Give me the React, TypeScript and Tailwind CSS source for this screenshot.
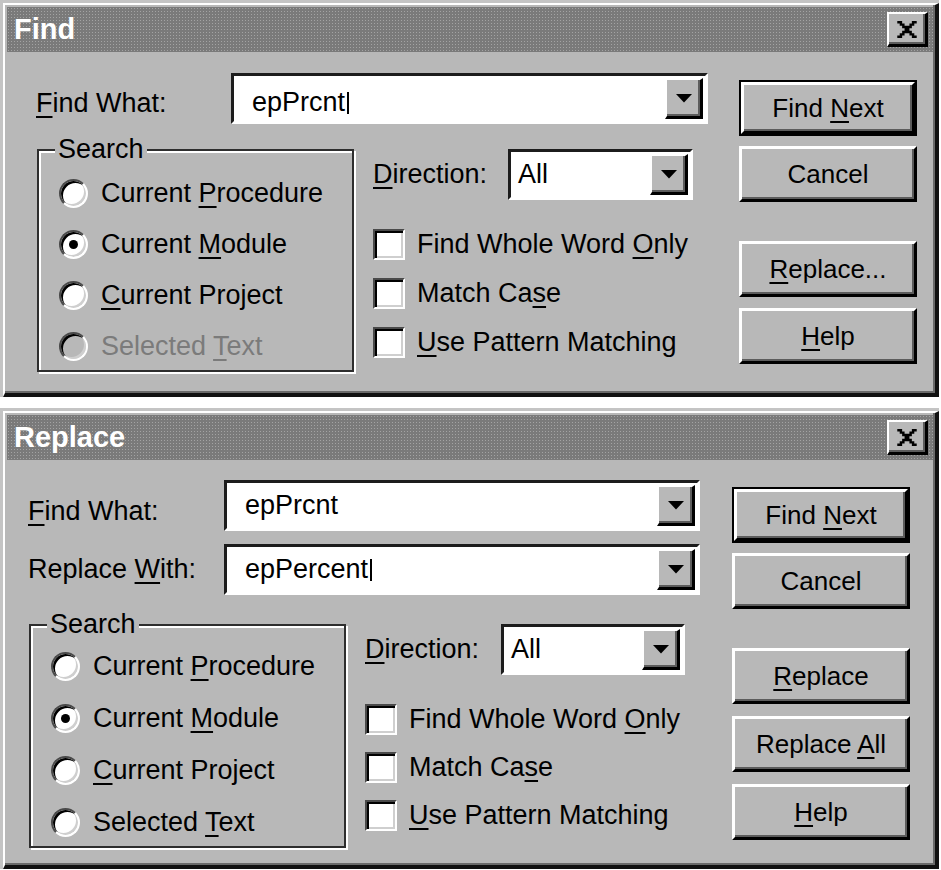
import React from "react";

const FACE = "bg-[#b8b8b8]";

function U({ children }: { children: React.ReactNode }) {
  return <span className="underline decoration-2 underline-offset-[4px]">{children}</span>;
}

function Arrow() {
  return (
    <svg width="16" height="9" viewBox="0 0 16 9">
      <polygon points="0,0 16,0 8,8.5" fill="#000" />
    </svg>
  );
}

function CloseGlyph() {
  return (
    <svg width="20" height="17" viewBox="0 0 8 7">
      <path
        d="M0 0h2v1H0zM6 0h2v1H6zM1 1h2v1H1zM5 1h2v1H5zM2 2h4v1H2zM3 3h2v1H3zM2 4h4v1H2zM1 5h2v1H1zM5 5h2v1H5zM0 6h2v1H0zM6 6h2v1H6z"
        fill="#000"
      />
    </svg>
  );
}

function TitleBar({ title }: { title: string }) {
  return (
    <div className="flex h-[45px] items-center justify-between bg-[#7a7a7a] pl-[7px] pr-[5px] [background-image:radial-gradient(circle,#a3a3a3_0.7px,transparent_1px)] [background-size:3px_3px]">
      <span className="text-[29px] leading-none font-bold text-white">{title}</span>
      <div className={`flex h-[35px] w-[41px] items-center justify-center border-t-2 border-l-2 border-t-white border-l-white border-b-[3px] border-r-[3px] border-b-black border-r-black ${FACE} shadow-[inset_-2px_-2px_0_#5c5c5c]`}>
        <CloseGlyph />
      </div>
    </div>
  );
}

function Dialog({ title, body, children }: { title: string; body: string; children: React.ReactNode }) {
  return (
    <div className="w-[939px] border-t-[3px] border-l-[3px] border-t-[#c4c4c4] border-l-[#c4c4c4]">
      <div className={`border-t-2 border-l-2 border-t-white border-l-white border-b-4 border-r-4 border-b-[#111] border-r-[#111] ${FACE} p-[2px] shadow-[inset_-2px_-2px_0_#6a6a6a]`}>
        <TitleBar title={title} />
        <div className={body}>{children}</div>
      </div>
    </div>
  );
}

function Btn({ children, def, gap }: { children: React.ReactNode; def?: boolean; gap?: string }) {
  const face = (
    <div className={`flex h-full w-full items-center justify-center border-t-[3px] border-l-[3px] border-t-white border-l-white border-b-[3px] border-r-[3px] border-b-black border-r-black ${FACE} shadow-[inset_-2px_-2px_0_#5c5c5c] text-[26px] leading-none text-black`}>
      <span>{children}</span>
    </div>
  );
  return (
    <div className={`h-[56px] w-[178px] ${gap ?? ""} ${def ? "border-2 border-black" : ""}`}>{face}</div>
  );
}

function Combo({ w, pad, children }: { w: string; pad: string; children: React.ReactNode }) {
  return (
    <div className={`flex h-[51px] ${w} border-t-[3px] border-l-[3px] border-t-[#1c1c1c] border-l-[#1c1c1c] border-b-[3px] border-r-[3px] border-b-white border-r-white bg-white`}>
      <div className={`flex flex-1 items-center ${pad} text-[27px] leading-none text-black`}>{children}</div>
      <div className={`my-[2px] mr-[2px] flex w-[38px] items-center justify-center border-t-2 border-l-2 border-t-white border-l-white border-b-[3px] border-r-[3px] border-b-black border-r-black ${FACE} shadow-[inset_-2px_-2px_0_#5c5c5c]`}>
        <Arrow />
      </div>
    </div>
  );
}

function Caret() {
  return <span className="ml-[2px] inline-block h-[22px] w-[2px] bg-black" />;
}

function Radio({ checked, disabled }: { checked?: boolean; disabled?: boolean }) {
  return (
    <div
      className={`flex h-[29px] w-[29px] shrink-0 items-center justify-center rounded-full border-2 border-t-[#4a4a4a] border-l-[#4a4a4a] border-b-white border-r-white ${disabled ? FACE : "bg-white"} shadow-[inset_2px_2px_0_#000,inset_-2px_-2px_0_#cfcfcf]`}
    >
      {checked && <div className="h-[9px] w-[9px] rounded-full bg-black" />}
    </div>
  );
}

function Check() {
  return (
    <div className="h-[31px] w-[32px] shrink-0 border-2 border-t-[#4a4a4a] border-l-[#4a4a4a] border-b-white border-r-white bg-white shadow-[inset_2px_2px_0_#000,inset_-2px_-2px_0_#cfcfcf]" />
  );
}

function SearchGroup({ h, pt, row, disabledLast }: { h: string; pt: string; row: string; disabledLast?: boolean }) {
  const items: { label: React.ReactNode; checked?: boolean; disabled?: boolean }[] = [
    { label: <>Current <U>P</U>rocedure</> },
    { label: <>Current <U>M</U>odule</>, checked: true },
    { label: <><U>C</U>urrent Project</> },
    { label: <>Selected <U>T</U>ext</>, disabled: disabledLast },
  ];
  return (
    <div className={`relative ml-[1px] w-[317px] ${h} border-2 border-[#2e2e2e] shadow-[2px_2px_0_#fff,inset_2px_2px_0_#fff] ${pt}`}>
      <span className={`absolute -top-[15px] left-[16px] ${FACE} px-[3px] text-[27px] leading-[26px] text-black`}>Search</span>
      {items.map((it, i) => (
        <div key={i} className={`flex ${row} items-center gap-[13px] pl-[20px]`}>
          <Radio checked={it.checked} disabled={it.disabled} />
          <span className={`text-[27px] leading-none ${it.disabled ? "text-[#7b7b7b]" : "text-black"}`}>{it.label}</span>
        </div>
      ))}
    </div>
  );
}

function Options({ labelW, comboW, row }: { labelW: string; comboW: string; row: string }) {
  return (
    <div className="ml-[19px] flex flex-col">
      <div className="flex items-center">
        <span className={`${labelW} text-[27px] leading-none`}>
          <U>D</U>irection:
        </span>
        <Combo w={comboW} pad="pl-[7px]">All</Combo>
      </div>
      <div className="mt-[20px] flex flex-col">
        {[
          <>Find Whole Word <U>O</U>nly</>,
          <>Match Ca<U>s</U>e</>,
          <><U>U</U>se Pattern Matching</>,
        ].map((l, i) => (
          <div key={i} className={`flex ${row} items-center gap-[12px]`}>
            <Check />
            <span className="text-[27px] leading-none">{l}</span>
          </div>
        ))}
      </div>
    </div>
  );
}

export default function App() {
  return (
    <div className="min-h-[870px] w-[941px] bg-white font-['Liberation_Sans',Arial,sans-serif] text-black">
      <Dialog title="Find" body="flex h-[339px] pl-[29px]">
        <div className="flex w-[672px] flex-col">
          <div className="mt-[21px] flex items-center">
            <span className="mt-[10px] w-[195px] text-[27px] leading-none">
              <U>F</U>ind What:
            </span>
            <Combo w="w-[477px]" pad="pl-[18px] pt-[8px]">
              <span>epPrcnt</span>
              <Caret />
            </Combo>
          </div>
          <div className="mt-[25px] flex items-start">
            <SearchGroup h="h-[223px]" pt="pt-[17px]" row="h-[51px]" disabledLast />
            <Options labelW="w-[135px]" comboW="w-[185px]" row="h-[49px]" />
          </div>
        </div>
        <div className="ml-[31px] mt-[28px] flex w-[178px] flex-col">
          <Btn def>
            Find <U>N</U>ext
          </Btn>
          <Btn gap="mt-[10px]">Cancel</Btn>
          <Btn gap="mt-[39px]">
            <U>R</U>eplace...
          </Btn>
          <Btn gap="mt-[11px]">
            <U>H</U>elp
          </Btn>
        </div>
      </Dialog>
      <div className="h-[11px]" />
      <Dialog title="Replace" body="flex h-[403px] pl-[21px]">
        <div className="flex w-[672px] flex-col">
          <div className="mt-[20px] flex items-center">
            <span className="mt-[12px] w-[196px] text-[27px] leading-none">
              <U>F</U>ind What:
            </span>
            <Combo w="w-[476px]" pad="pl-[18px]">
              <span>epPrcnt</span>
            </Combo>
          </div>
          <div className="mt-[13px] flex items-center">
            <span className="w-[196px] text-[27px] leading-none">
              Replace <U>W</U>ith:
            </span>
            <Combo w="w-[476px]" pad="pl-[18px]">
              <span>epPercent</span>
              <Caret />
            </Combo>
          </div>
          <div className="mt-[29px] flex items-start">
            <SearchGroup h="h-[224px]" pt="pt-[14px]" row="h-[52px]" />
            <Options labelW="w-[136px]" comboW="w-[184px]" row="h-[48px]" />
          </div>
        </div>
        <div className="ml-[32px] mt-[27px] flex w-[178px] flex-col">
          <Btn def>
            Find <U>N</U>ext
          </Btn>
          <Btn gap="mt-[10px]">Cancel</Btn>
          <Btn gap="mt-[39px]">
            <U>R</U>eplace
          </Btn>
          <Btn gap="mt-[12px]">
            Replace <U>A</U>ll
          </Btn>
          <Btn gap="mt-[12px]">
            <U>H</U>elp
          </Btn>
        </div>
      </Dialog>
    </div>
  );
}
